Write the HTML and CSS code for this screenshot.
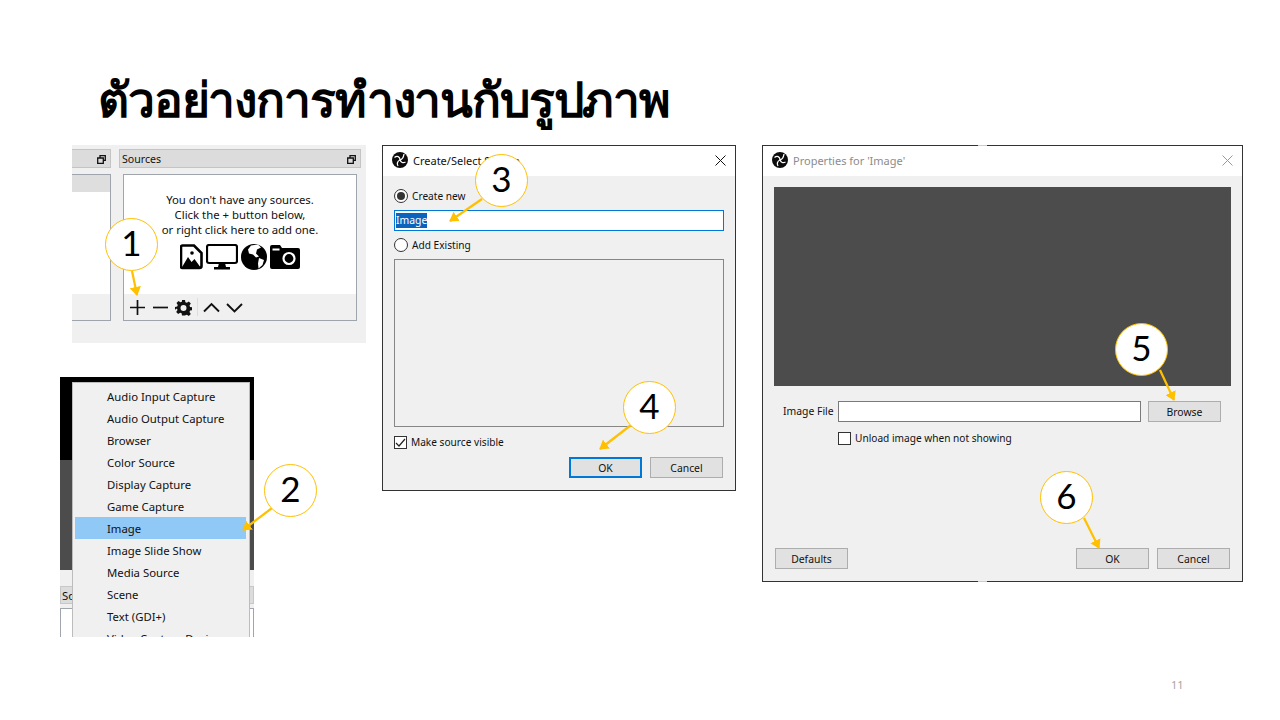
FILE: index.html
```html
<!DOCTYPE html>
<html lang="th">
<head>
  <meta charset="UTF-8" />
  <title>ตัวอย่างการทำงานกับรูปภาพ</title>
  <link rel="stylesheet" href="styles.css">
</head>
<body>
<svg class="defs" width="0" height="0">
  <symbol id="obs" viewBox="0 0 32 32">
    <circle cx="16" cy="16" r="16" fill="#0c0c0c"/>
    <g fill="none" stroke="#fff" stroke-width="2.600">
      <path d="M5 11c5-4 11-2 11 5"/>
      <path d="M24 4c-1 7-4 11-8 12"/>
      <path d="M27 20c-5 3-9 1-11-4"/>
      <path d="M12 28c-3-5-1-10 4-12"/>
    </g>
  </symbol>
  <symbol id="dock" viewBox="0 0 9 9">
    <path fill="none" stroke="#111" stroke-width="1.3" d="M3 2.600V.7h5.300v4.600H6.300M.7 3h5.600v5.300H.7z"/>
  </symbol>
</svg>

<div class="slide">
  <h1 class="title">ตัวอย่างการทำงานกับรูปภาพ</h1>

  <!-- sources dock -->
  <div class="shot shot-docks">
    <div class="dock dock-cut">
      <div class="dock-bar"><svg class="dock-icon"><use href="#dock"/></svg></div>
      <div class="dock-box">
        <div class="list-head"></div>
        <div class="dock-msg"></div>
        <div class="dock-tools"></div>
      </div>
    </div>
    <div class="dock dock-sources">
      <div class="dock-bar"><span>Sources</span><svg class="dock-icon"><use href="#dock"/></svg></div>
      <div class="dock-box">
        <div class="dock-msg">
          <p>You don't have any sources.<br>Click the + button below,<br>or right click here to add one.</p>
          <div class="src-icons">
            <svg width="23" height="26" viewBox="0 0 23 26"><path d="M2.500 1.500h11.500l7.500 7.500v13a2 2 0 0 1-2 2H2.500a1.500 1.500 0 0 1-1.500-1.500V3a1.500 1.500 0 0 1 1.500-1.500z" fill="#fff" stroke="#000" stroke-width="2.600"/><circle cx="12" cy="9" r="1.800" fill="#000"/><path d="M1.500 24l6.500-11 3.500 5 3-3 6.500 9z" fill="#000"/></svg>
            <svg width="32" height="26" viewBox="0 0 32 26"><rect x="1" y="1" width="30" height="18" rx="2" fill="#fff" stroke="#000" stroke-width="2.200"/><path d="M13 19h6l1 4h4v2.500H8V23h4z" fill="#000"/></svg>
            <svg width="26" height="26" viewBox="0 0 26 26"><circle cx="13" cy="13" r="13" fill="#000"/><path fill="#fff" d="M10 1.500l7-1 3 3-4 2-1 4 3 3-3 1-3-3-4-1-1-4zM18 14l5 2-1.500 5-4 3.500-.5-5z"/></svg>
            <svg width="30" height="24" viewBox="0 0 30 24"><path d="M2 0h8l2 3h16a2 2 0 0 1 2 2v17a2 2 0 0 1-2 2H2a2 2 0 0 1-2-2V2a2 2 0 0 1 2-2z" fill="#000"/><rect x="2.500" y="3.500" width="7" height="2" fill="#fff"/><circle cx="19" cy="13.500" r="5.500" fill="#000" stroke="#fff" stroke-width="2.200"/></svg>
          </div>
        </div>
        <div class="dock-tools">
          <svg class="tool" viewBox="0 0 17 17"><path d="M8.500 1v15M1 8.500h15" stroke="#111" stroke-width="1.700"/></svg>
          <svg class="tool" viewBox="0 0 17 17"><path d="M1 8.500h15" stroke="#111" stroke-width="1.700"/></svg>
          <svg class="tool" viewBox="0 0 17 17"><path fill="#111" fill-rule="evenodd" d="M7 1h3l.4 2.200 1.500.6L13.800 2.500l2 2.100-1.300 1.900.6 1.500 2.200.4v2.800l-2.200.4-.6 1.500 1.300 1.900-2 2-1.900-1.300-1.500.6L10 16.500H7l-.4-2.200-1.500-.6-1.900 1.300-2-2 1.300-1.900-.6-1.500L0 10.700V7.900l2.200-.4.600-1.500-1.300-1.900 2-2.100 1.900 1.300 1.500-.6zM8.500 6a3 3 0 1 0 0 6 3 3 0 0 0 0-6z"/></svg>
          <span class="tool-sep"></span>
          <svg class="tool" viewBox="0 0 17 17"><path d="M1 12.500l7.500-7.500 7.500 7.500" fill="none" stroke="#111" stroke-width="1.900"/></svg>
          <svg class="tool" viewBox="0 0 17 17"><path d="M1 5l7.500 7.500L16 5" fill="none" stroke="#111" stroke-width="1.900"/></svg>
        </div>
      </div>
    </div>
  </div>

  <!-- add source menu -->
  <div class="shot shot-menu">
    <div class="band-black"></div>
    <div class="band-grey"></div>
    <div class="band-light">
      <div class="so-bar">So</div>
      <div class="so-box"></div>
    </div>
    <ul class="menu">
      <li>Audio Input Capture</li>
      <li>Audio Output Capture</li>
      <li>Browser</li>
      <li>Color Source</li>
      <li>Display Capture</li>
      <li>Game Capture</li>
      <li class="selected">Image</li>
      <li>Image Slide Show</li>
      <li>Media Source</li>
      <li>Scene</li>
      <li>Text (GDI+)</li>
      <li>Video Capture Device</li>
    </ul>
  </div>

  <!-- create/select source -->
  <div class="shot win win-create">
    <div class="win-title">
      <svg class="win-logo"><use href="#obs"/></svg>
      <span>Create/Select Source</span>
      <svg class="win-close" viewBox="0 0 11 11"><path d="M.5.5l10 10M10.500.5l-10 10" stroke="#111"/></svg>
    </div>
    <div class="win-body">
      <label class="opt"><span class="radio on"></span>Create new</label>
      <div class="input focus"><span class="sel">Image</span></div>
      <label class="opt"><span class="radio"></span>Add Existing</label>
      <div class="existing"></div>
      <label class="opt"><span class="check"><svg viewBox="0 0 11 11"><path d="M1 6l3 3 6-7" fill="none" stroke="#222" stroke-width="1.200"/></svg></span>Make source visible</label>
      <div class="win-btns">
        <button class="btn default">OK</button>
        <button class="btn">Cancel</button>
      </div>
    </div>
  </div>

  <!-- properties -->
  <div class="shot win win-props">
    <span class="notch notch-top"></span>
    <div class="win-title dim">
      <svg class="win-logo"><use href="#obs"/></svg>
      <span>Properties for 'Image'</span>
      <svg class="win-close" viewBox="0 0 11 11"><path d="M.5.5l10 10M10.500.5l-10 10" stroke="#999"/></svg>
    </div>
    <div class="win-body props-body">
      <div class="preview"></div>
      <div class="file-row">
        <span class="file-label">Image File</span>
        <div class="input file-input"></div>
        <button class="btn">Browse</button>
      </div>
      <label class="opt unload"><span class="check"></span>Unload image when not showing</label>
      <div class="props-foot">
        <button class="btn">Defaults</button>
        <span class="foot-right">
          <button class="btn">OK</button>
          <button class="btn">Cancel</button>
        </span>
      </div>
    </div>
    <span class="notch notch-bottom"></span>
  </div>

  <!-- numbered callouts -->
  <svg class="arrows" width="1280" height="720" viewBox="0 0 1280 720">
    <defs>
      <marker id="head" markerWidth="5" markerHeight="5" refX="3.600" refY="2.500" orient="auto"><path d="M0 0l4 2.500L0 5z" fill="#ffc000"/></marker>
    </defs>
    <g stroke="#ffc000" stroke-width="2.250">
      <line x1="132" y1="271" x2="137" y2="295" marker-end="url(#head)"/>
      <line x1="272" y1="508" x2="243" y2="530" marker-end="url(#head)"/>
      <line x1="482" y1="199" x2="450" y2="221" marker-end="url(#head)"/>
      <line x1="631" y1="425" x2="600" y2="449" marker-end="url(#head)"/>
      <line x1="1160" y1="370" x2="1174" y2="400" marker-end="url(#head)"/>
      <line x1="1084" y1="518" x2="1099" y2="548" marker-end="url(#head)"/>
    </g>
  </svg>
  <div class="callout c1">1</div>
  <div class="callout c2">2</div>
  <div class="callout c3">3</div>
  <div class="callout c4">4</div>
  <div class="callout c5">5</div>
  <div class="callout c6">6</div>

  <div class="page-num">11</div>
</div>
</body>
</html>
```
FILE: styles.css
```css
* { box-sizing: border-box; }
body {
  margin: 0;
  background: #fff;
  font-family: "Noto Sans", "Open Sans", sans-serif;
  color: #111;
}
.defs { position: absolute; }
.slide {
  position: relative;
  width: 1280px;
  height: 720px;
  overflow: hidden;
  background: #fff;
}
.title {
  margin: 0;
  padding: 63px 0 0 98px;
  font-family: "Liberation Sans", "Noto Sans", sans-serif;
  font-size: 48px;
  letter-spacing: -1.15px;
  line-height: 76px;
  font-weight: 700;
  color: #000;
}

/* screenshots sit on the slide like pasted pictures */
.shot {
  position: absolute;
  font-size: 11.35px;
  line-height: 15px;
}

/* dock screenshot */
.shot-docks {
  left: 72px;
  top: 145px;
  width: 294px;
  height: 198px;
  background: #f0f0f0;
  display: flex;
  gap: 8px;
  padding-top: 4px;
}
.dock-cut { width: 39px; }
.dock-sources { width: 242px; }
.dock-bar {
  height: 19px;
  background: #dcdcdc;
  border: 1px solid #c4c4c4;
  display: flex;
  align-items: center;
  justify-content: space-between;
  padding: 1px 4px 0 2px;
  font-size: 10.6px;
}
.dock-cut .dock-bar { justify-content: flex-end; border-left: 0; }
.dock-icon { width: 9px; height: 9px; }
.dock-box {
  display: flex;
  flex-direction: column;
  height: 147px;
  margin-top: 6px;
  background: #fff;
  border: 1px solid #a0a4ac;
}
.dock-cut .dock-box { border-left: 0; }
.dock-sources .dock-box { margin-left: 4px; width: 234px; }
.list-head { height: 17px; background: #dedede; }
.dock-msg { flex: 1; text-align: center; padding-top: 17px; }
.dock-msg p { margin: 0; }
.src-icons {
  display: flex;
  justify-content: center;
  align-items: center;
  gap: 3px;
  margin-top: 7px;
}
.dock-tools {
  height: 26px;
  background: #f0f0f0;
  display: flex;
  align-items: center;
  gap: 6px;
  padding-left: 5px;
}
.tool { width: 17px; height: 17px; }
.tool-sep { width: 1px; height: 18px; background: #ddd; margin: 0 -1px; }

/* context menu screenshot */
.shot-menu {
  left: 60px;
  top: 377px;
  width: 194px;
  height: 260px;
  display: flex;
  flex-direction: column;
  overflow: hidden;
}
.band-black { height: 83px; flex: none; background: #000; }
.band-grey { height: 110px; flex: none; background: #4c4c4c; }
.band-light { flex: 1; background: #f0f0f0; padding-top: 16px; }
.so-bar {
  height: 18px;
  background: #dcdcdc;
  border: 1px solid #c8c8c8;
  padding-left: 1px;
  line-height: 17px;
}
.so-box { height: 60px; margin-top: 4px; background: #fff; border: 1px solid #a0a4ac; }
.menu {
  position: absolute;
  left: 12px;
  top: 5px;
  width: 178px;
  height: 270px;
  margin: 0;
  padding: 2px 3px 0 2px;
  list-style: none;
  background: #f0f0f0;
  border: 1px solid #bcbcbc;
}
.menu li { height: 22px; line-height: 24px; padding-left: 32px; white-space: nowrap; }
.menu .selected { background: #90c8f6; }

/* OBS style windows */
.win {
  display: flex;
  flex-direction: column;
  background: #f0f0f0;
  border: 1px solid #333;
}
.win-create { left: 382px; top: 145px; width: 354px; height: 346px; }
.win-props { left: 762px; top: 145px; width: 481px; height: 437px; }
.win-title {
  height: 30px;
  flex: none;
  background: #fff;
  display: flex;
  align-items: center;
  padding: 0 9px 2px;
  gap: 5px;
  font-size: 11px;
}
.win-title.dim { color: #8c8c8c; }
.win-logo { width: 16px; height: 16px; }
.win-close { width: 11px; height: 11px; margin-left: auto; }
.win-body {
  flex: 1;
  display: flex;
  flex-direction: column;
  padding: 10px 11px 12px;
  font-size: 10.4px;
}
.props-body { padding-top: 11px; }
.opt { display: flex; align-items: center; height: 20px; gap: 4px; flex: none; font-size: 10.15px; }
.radio {
  width: 14px;
  height: 14px;
  border-radius: 50%;
  border: 1px solid #333;
  background: #fff;
  display: flex;
  align-items: center;
  justify-content: center;
}
.radio.on::after {
  content: "";
  width: 8px;
  height: 8px;
  border-radius: 50%;
  background: #333;
}
.input {
  height: 21px;
  background: #fff;
  border: 1px solid #7a7a7a;
  flex: none;
}
.input.focus {
  border-color: #0078d7;
  margin: 4px 0;
  padding: 2px 1px 0;
  line-height: 15px;
}
.sel { display: inline-block; background: #0a64bd; color: #fff; }
.existing { height: 168px; margin: 4px 0 5px; border: 1px solid #868686; background: #f0f0f0; flex: none; }
.check {
  width: 13px;
  height: 13px;
  border: 1px solid #333;
  background: #fff;
  display: flex;
}
.win-btns {
  display: flex;
  justify-content: flex-end;
  gap: 8px;
  margin: 5px 1px 0 0;
}
.btn {
  width: 73px;
  height: 21px;
  padding: 1px 0 0;
  background: #e1e1e1;
  border: 1px solid #adadad;
  font: inherit;
  color: #111;
}
.btn.default { border: 2px solid #0078d7; }

.preview { height: 199px; background: #4c4c4c; flex: none; }
.file-row { display: flex; align-items: center; margin-top: 15px; padding-left: 9px; }
.file-label { width: 55px; white-space: nowrap; }
.file-input { width: 303px; margin-right: 7px; }
.unload { margin-top: 6px; padding-left: 64px; }
.props-foot {
  margin-top: auto;
  display: flex;
  justify-content: space-between;
  padding: 0 1px;
}
.foot-right { display: flex; gap: 8px; }
.notch {
  position: absolute;
  left: 215px;
  width: 9px;
  height: 1px;
  background: #ccc;
}
.notch-top { top: -1px; }
.notch-bottom { bottom: -1px; }

/* callouts */
.arrows { position: absolute; left: 0; top: 0; }
.callout {
  position: absolute;
  width: 53px;
  height: 53px;
  padding-bottom: 5px;
  border-radius: 50%;
  background: #fff;
  border: 1px solid #ffc000;
  display: flex;
  align-items: center;
  justify-content: center;
  font-family: Lato, "Noto Sans", sans-serif;
  font-size: 35px;
  line-height: 1;
  color: #000;
}
.c1 { left: 105px; top: 218px; }
.c2 { left: 264px; top: 464px; }
.c3 { left: 475px; top: 154px; }
.c4 { left: 623px; top: 381px; }
.c5 { left: 1115px; top: 323px; }
.c6 { left: 1040px; top: 471px; }

.page-num {
  position: absolute;
  left: 1171px;
  top: 678px;
  font-size: 11px;
  line-height: 14px;
  color: #a6a6a6;
}
```
